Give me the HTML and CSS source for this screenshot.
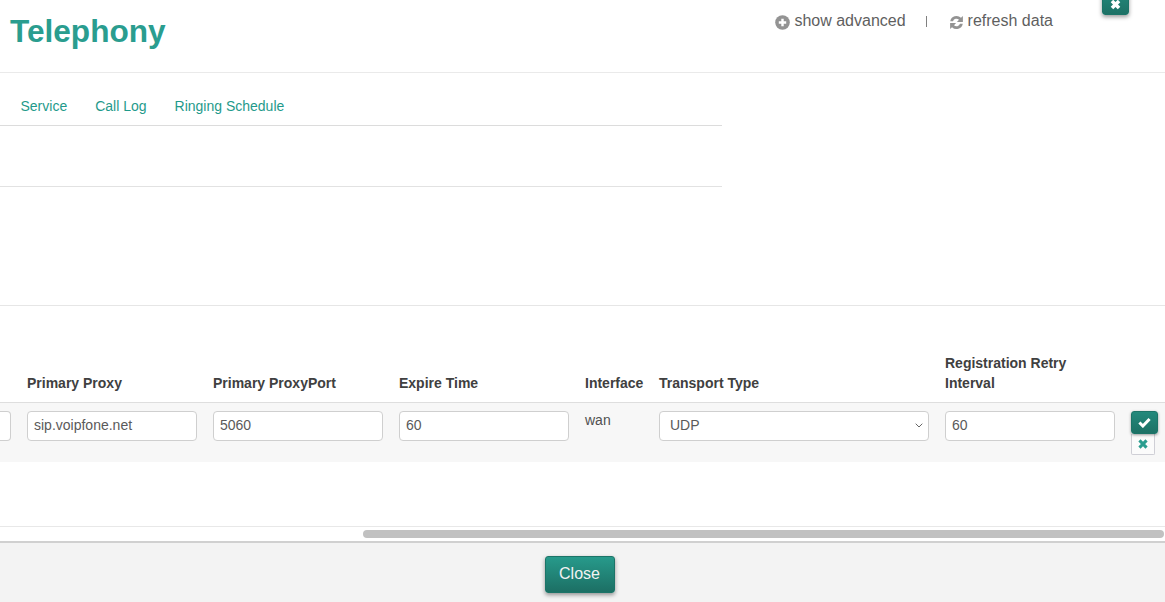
FILE: index.html
```html
<!DOCTYPE html>
<html lang="en">
<head>
<meta charset="utf-8">
<title>Telephony</title>
<link rel="stylesheet" href="styles.css">
</head>
<body>
<div class="modal">
  <button class="dismiss" type="button" aria-label="Dismiss">
    <svg width="11" height="11" viewBox="0 0 10 10"><path d="M1.8 1.8l6.4 6.4M8.2 1.8L1.8 8.2" stroke="#fff" stroke-width="3.2" fill="none"/></svg>
  </button>
  <header class="head">
    <h1 class="title">Telephony</h1>
    <div class="tools">
      <a class="tool">
        <svg class="tool-icon" width="15" height="15" viewBox="0 0 15 15"><circle cx="7.5" cy="7.5" r="7.3" fill="#939393"/><path d="M7.5 3.8v7.4M3.8 7.5h7.4" stroke="#fff" stroke-width="2.4"/></svg>
        show advanced
      </a>
      <span class="sep"></span>
      <a class="tool">
        <svg class="tool-icon" width="15" height="15" viewBox="0 0 15 15"><path d="M1.2 6.2A6.4 6.4 0 0 1 12 2.8L13.9.9V6.9H7.9L10 4.8A3.6 3.6 0 0 0 4 6.2Z" fill="#939393"/><path d="M13.8 8.8A6.4 6.4 0 0 1 3 12.2L1.1 14.1V8.1H7.1L5 10.2A3.6 3.6 0 0 0 11 8.8Z" fill="#939393"/></svg>
        refresh data
      </a>
    </div>
  </header>
  <nav class="tabs">
    <a class="tab">Service</a>
    <a class="tab">Call Log</a>
    <a class="tab">Ringing Schedule</a>
  </nav>
  <div class="blank-a"></div>
  <div class="blank-b"></div>
  <section class="grid-wrap">
    <div class="grid heads">
      <div></div>
      <div class="th">Primary Proxy</div>
      <div class="th">Primary ProxyPort</div>
      <div class="th">Expire Time</div>
      <div class="th">Interface</div>
      <div class="th">Transport Type</div>
      <div class="th">Registration Retry Interval</div>
      <div></div>
    </div>
    <div class="grid row">
      <input class="field stub" type="text" aria-label="Hidden column">
      <input class="field" type="text" value="sip.voipfone.net" aria-label="Primary Proxy">
      <input class="field" type="text" value="5060" aria-label="Primary ProxyPort">
      <input class="field" type="text" value="60" aria-label="Expire Time">
      <div class="static">wan</div>
      <div class="field select">
        <span>UDP</span>
        <svg width="8" height="5" viewBox="0 0 8 5"><path d="M.7.7L4 4l3.3-3.3" stroke="#666" stroke-width="1" fill="none"/></svg>
      </div>
      <input class="field" type="text" value="60" aria-label="Registration Retry Interval">
      <div class="actions">
        <button class="act save" type="button" aria-label="Save">
          <svg width="13" height="11" viewBox="0 0 12 10"><path d="M1.3 5l3.2 3.2 6.2-6.4" stroke="#fff" stroke-width="2.8" fill="none"/></svg>
        </button>
        <button class="act reset" type="button" aria-label="Reset">
          <svg width="10" height="10" viewBox="0 0 9 9"><path d="M1.3 1.3l6.4 6.4M7.7 1.3L1.3 7.7" stroke="#2a9d8f" stroke-width="2.8" fill="none"/></svg>
        </button>
      </div>
    </div>
  </section>
  <div class="scroll-track"><div class="scroll-thumb"></div></div>
  <footer class="foot"><button class="close" type="button">Close</button></footer>
</div>
</body>
</html>
```
FILE: styles.css
```css
* { box-sizing: border-box; }
html, body { margin: 0; height: 602px; overflow: hidden; background: #fff; }
body { font-family: "Liberation Sans", Arial, sans-serif; color: #404040; }
.modal { height: 602px; display: flex; flex-direction: column; position: relative; }
.dismiss {
  position: absolute; left: 1102px; top: -10px; width: 27px; height: 25px; padding: 8px 0 0;
  border: 1px solid #1c7468; border-radius: 3px;
  background: linear-gradient(#23897c, #1d7165);
  box-shadow: 0 2px 4px rgba(0,0,0,.4);
  display: flex; justify-content: center; align-items: flex-start;
}
.head {
  height: 73px; border-bottom: 1px solid #eaeaea; display: flex;
  justify-content: space-between; align-items: flex-start; flex: none;
}
.title { margin: 13px 0 0 10px; font-size: 31.6px; line-height: 37px; font-weight: 700; color: #2a9d8f; }
.tools { display: flex; align-items: center; margin: 11px 112px 0 0; font-size: 16px; line-height: 20px; color: #5f5f5f; }
.tool { display: flex; align-items: center; gap: 4px; }
.tool-icon { margin-top: 3px; }
.sep { width: 1px; height: 11px; margin: 0 22px 0 20px; background: #808080; }
.tabs {
  width: 722px; height: 53px; border-bottom: 1px solid #dcdcdc; flex: none;
  display: flex; gap: 28px; padding: 24px 0 0 20.5px; font-size: 14px; line-height: 18px; color: #1f9a8b;
}
.blank-a { width: 722px; height: 61px; border-bottom: 1px solid #e2e2e2; flex: none; }
.blank-b { height: 119px; border-bottom: 1px solid #e6e6e6; flex: none; }
.grid-wrap { height: 221px; border-bottom: 1px solid #e8e8e8; flex: none; }
.grid {
  display: grid; column-gap: 16px;
  grid-template-columns: 11px 170px 170px 170px 58px 270px 170px 27px;
}
.heads { height: 97px; border-bottom: 1px solid #dedede; align-items: end; padding-bottom: 9px; }
.th { font-size: 14px; line-height: 20px; font-weight: 700; color: #404040; }
.row { height: 59px; background: #f7f7f7; padding-top: 8px; align-items: start; }
.field {
  height: 30px; width: 100%; min-width: 0; border: 1px solid #cfcfcf; border-radius: 4px; background: #fff;
  padding: 0 6px 2px; font: 14px "Liberation Sans", Arial, sans-serif; color: #5a5a5a;
}
.stub { padding: 0; border-left: 0; border-radius: 0 4px 4px 0; }
.static { font-size: 14px; line-height: 18px; color: #505050; }
.select { display: flex; justify-content: space-between; align-items: center; padding: 0 5px 2px 10px; }
.actions { display: flex; flex-direction: column; align-items: flex-start; }
.act { padding: 0; display: flex; align-items: center; justify-content: center; }
.save {
  width: 27px; height: 23px; border: 1px solid #1c7468; border-radius: 3px;
  background: linear-gradient(#23897c, #1d7165); box-shadow: 0 1px 3px rgba(0,0,0,.4); position: relative;
}
.reset { width: 24px; height: 21px; border: 1px solid #cfcfd6; border-top: 0; border-radius: 0 0 2px 2px; background: #fbfbfb; }
.scroll-track { height: 16px; padding: 3px 1px 0 363px; background: #fff; border-bottom: 2px solid #d0d0d0; flex: none; }
.scroll-thumb { height: 8px; border-radius: 4px; background: #c1c1c1; }
.foot { flex: 1; background: #f3f3f3; display: flex; justify-content: center; padding: 13px 6px 0 0; }
.close {
  width: 70px; height: 37px; border: 1px solid #1c7468; border-radius: 3px; color: #f2f2f2;
  background: linear-gradient(#279a8b, #1c6f64); box-shadow: 0 2px 4px rgba(0,0,0,.4);
  font: 16px "Liberation Sans", Arial, sans-serif; padding: 0 0 2px;
}
```
